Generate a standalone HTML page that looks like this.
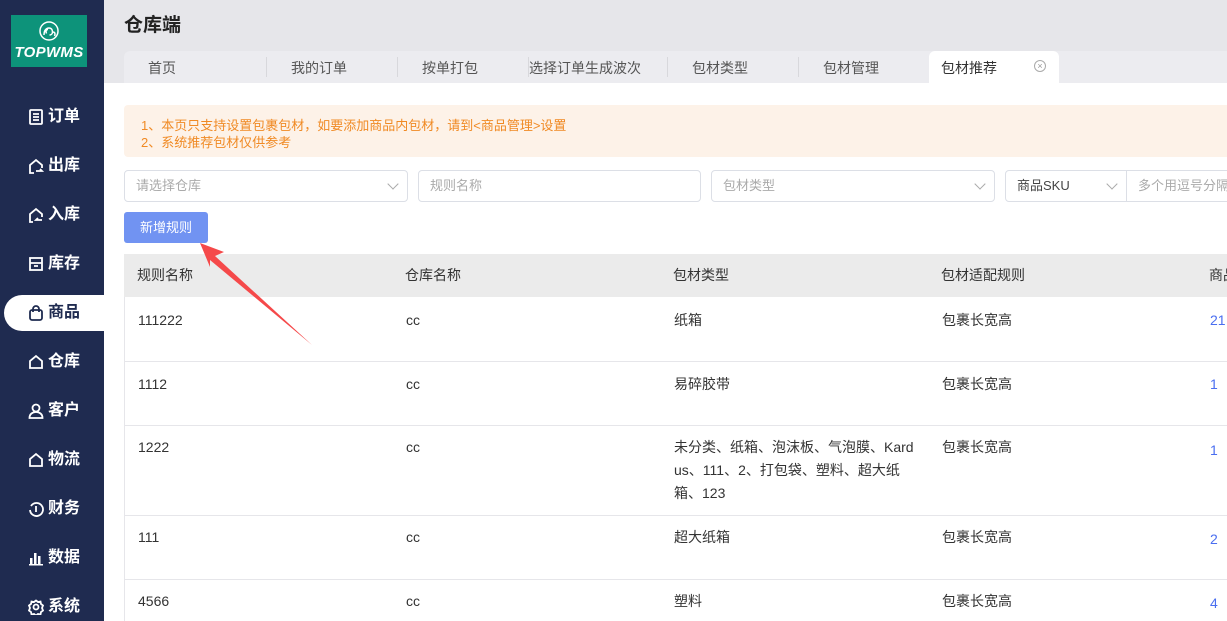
<!DOCTYPE html>
<html style="overflow:hidden;height:621px"><head><meta charset="utf-8"><style>
*{margin:0;padding:0;box-sizing:border-box}
body{width:1227px;height:621px;overflow:hidden;font-family:"Liberation Sans","Noto Sans CJK SC",sans-serif;background:#fff;position:relative;font-size:14px;color:#333}
.side{position:absolute;left:0;top:0;width:104px;height:621px;background:#1f2b50}
.logo{position:absolute;left:11px;top:15px;width:76px;height:52px;background:#0d937a;color:#fff;text-align:center}
.logo .t{position:absolute;left:0;right:0;top:29px;font-size:15px;font-weight:bold;font-style:italic;letter-spacing:0.3px}
.nav{position:absolute;left:0;width:104px;height:36px;color:#fff;font-weight:bold;font-size:16px;line-height:36px;white-space:nowrap}
.nav svg{position:absolute;left:28px;top:10px}
.nav span{position:absolute;left:48px}
.nav.act{left:4px;width:100px;background:#fff;color:#1f2b50;border-radius:18px 0 0 18px}
.nav.act svg{left:24px}.nav.act span{left:44px}
.top{position:absolute;left:104px;top:0;right:0;height:83px;background:#e6e6ea}
.title{position:absolute;left:124px;top:10px;font-size:19px;font-weight:bold;color:#222}
.tabs{position:absolute;left:124px;top:51px;width:1103px;height:32px;background:#ececf0;border-radius:6px 0 0 0}
.tab{position:absolute;top:0;height:32px;line-height:34px;font-size:14px;color:#555;white-space:nowrap}
.sep{position:absolute;top:6px;width:1px;height:20px;background:#d8d8dc}
.tabact{position:absolute;left:929px;top:51px;width:130px;height:32px;background:#fff;border-radius:6px 6px 0 0;font-size:14px;line-height:34px;padding-left:12px;color:#333}
.notice{position:absolute;left:124px;top:105px;width:1103px;height:52px;background:#fdf2e8;border-radius:4px 0 0 4px;color:#f08a24;font-size:13px;line-height:17px;padding:12px 0 0 17px}
.inp{position:absolute;top:170px;height:32px;border:1px solid #dcdfe6;border-radius:4px;color:#aaa;font-size:13px;line-height:30px;padding-left:11px;background:#fff;white-space:nowrap;overflow:hidden}
.chev{position:absolute;right:10px;top:9px;width:8px;height:8px;border-right:1px solid #aaa;border-bottom:1px solid #aaa;transform:rotate(45deg)}
.btn{position:absolute;left:124px;top:212px;width:84px;height:31px;background:#7193f2;border-radius:3px;color:#fff;font-size:13px;line-height:32px;text-align:center}
.th{position:absolute;left:124px;top:254px;width:1103px;height:43px;background:#ebebeb;overflow:hidden}
.row{position:absolute;left:124px;width:1103px;border-bottom:1px solid #e6e6ea;border-left:1px solid #e6e6ea;overflow:hidden}
.c{position:absolute;font-size:14px;color:#333;line-height:23px;white-space:nowrap}
.lnk{color:#4a6ef0}
</style></head><body>
<div class="side">
 <div class="logo">
  <svg width="22" height="22" viewBox="0 0 22 22" style="position:absolute;left:27px;top:5px" fill="none" stroke="#fff" stroke-width="1.5"><circle cx="11" cy="11" r="9"/><path d="M6 15c0-5 2.5-7 5-7s3.5 2 3.5 4-1.5 3-3 3M10 9.5c-2 0-2.5 2-1.5 4M15 12c2 0 2.5 2 1.5 4"/></svg>
  <div class="t">TOPWMS</div>
 </div>
 <div class="nav" style="top:99px"><svg width="16" height="16" fill="none" stroke="#fff" stroke-width="1.8"><rect x="2" y="1" width="12" height="14" rx="1"/><path d="M5 5h6M5 8h6M5 11h6"/></svg><span>订单</span></div>
 <div class="nav" style="top:148px"><svg width="16" height="16" fill="none" stroke="#fff" stroke-width="1.8"><path d="M6 15H2V7l6-5 6 5v3M8 13h6l-2-2"/></svg><span>出库</span></div>
 <div class="nav" style="top:197px"><svg width="16" height="16" fill="none" stroke="#fff" stroke-width="1.8"><path d="M5 15H2V7l6-5 6 5v3M14 13H8l2-2"/></svg><span>入库</span></div>
 <div class="nav" style="top:246px"><svg width="16" height="16" fill="none" stroke="#fff" stroke-width="1.8"><rect x="2" y="2" width="12" height="12"/><path d="M2 7h12M6 10h4"/></svg><span>库存</span></div>
 <div class="nav act" style="top:295px"><svg width="16" height="16" fill="none" stroke="#1f2b50" stroke-width="1.8"><rect x="2" y="5" width="12" height="10" rx="2"/><path d="M5 7V4a3 3 0 016 0v3"/></svg><span>商品</span></div>
 <div class="nav" style="top:344px"><svg width="16" height="16" fill="none" stroke="#fff" stroke-width="1.8"><path d="M2 14V7l6-5 6 5v7z"/></svg><span>仓库</span></div>
 <div class="nav" style="top:393px"><svg width="16" height="16" fill="none" stroke="#fff" stroke-width="1.8"><circle cx="8" cy="5" r="3.5"/><path d="M1.5 15c0-4 3-6 6.5-6s6.5 2 6.5 6z"/></svg><span>客户</span></div>
 <div class="nav" style="top:442px"><svg width="16" height="16" fill="none" stroke="#fff" stroke-width="1.8"><path d="M2 14V7l6-5 6 5v7z"/></svg><span>物流</span></div>
 <div class="nav" style="top:491px"><svg width="16" height="16" fill="none" stroke="#fff" stroke-width="1.8"><path d="M3 5a6.5 6.5 0 11-1 4"/><path d="M8 5v6"/></svg><span>财务</span></div>
 <div class="nav" style="top:540px"><svg width="16" height="16" fill="#fff"><rect x="2" y="8" width="2.5" height="6"/><rect x="6" y="3" width="2.5" height="11"/><rect x="10" y="6" width="2.5" height="8"/><rect x="1" y="14" width="14" height="1.5"/></svg><span>数据</span></div>
 <div class="nav" style="top:589px"><svg width="16" height="16" fill="none" stroke="#fff" stroke-width="1.8"><circle cx="8" cy="8" r="2.5"/><path d="M8 1.5l2 1.5 2.5-.5.5 2.5 2 1.5-1 2.5 1 2.5-2 1.5-.5 2.5-2.5-.5-2 1.5-2-1.5-2.5.5-.5-2.5-2-1.5 1-2.5-1-2.5 2-1.5.5-2.5 2.5.5z"/></svg><span>系统</span></div>
</div>
<div class="top"></div>
<div class="title">仓库端</div>
<div class="tabs">
 <div class="tab" style="left:24px">首页</div><div class="sep" style="left:142px"></div>
 <div class="tab" style="left:167px">我的订单</div><div class="sep" style="left:273px"></div>
 <div class="tab" style="left:298px">按单打包</div><div class="sep" style="left:404px"></div>
 <div class="tab" style="left:405px">选择订单生成波次</div><div class="sep" style="left:543px"></div>
 <div class="tab" style="left:568px">包材类型</div><div class="sep" style="left:674px"></div>
 <div class="tab" style="left:699px">包材管理</div>
</div>
<div class="tabact">包材推荐<span style="position:absolute;left:105px;top:9px;width:12px;height:12px;border:1px solid #aaa;border-radius:50%;font-size:9px;line-height:10px;text-align:center;color:#999">×</span></div>
<div class="notice">1、本页只支持设置包裹包材，如要添加商品内包材，请到&lt;商品管理&gt;设置<br>2、系统推荐包材仅供参考</div>
<div class="inp" style="left:124px;width:284px">请选择仓库<i class="chev"></i></div>
<div class="inp" style="left:418px;width:283px">规则名称</div>
<div class="inp" style="left:711px;width:284px">包材类型<i class="chev"></i></div>
<div class="inp" style="left:1005px;width:122px;color:#444;border-radius:4px 0 0 4px">商品SKU<i class="chev"></i></div>
<div class="inp" style="left:1126px;width:110px;border-radius:0">多个用逗号分隔</div>
<div class="btn">新增规则</div>
<div class="th">
 <div class="c" style="left:13px;top:10px">规则名称</div>
 <div class="c" style="left:281px;top:10px">仓库名称</div>
 <div class="c" style="left:549px;top:10px">包材类型</div>
 <div class="c" style="left:817px;top:10px">包材适配规则</div>
 <div class="c" style="left:1085px;top:10px">商品</div>
</div>
<div class="row" style="top:297px;height:65px"><div class="c" style="left:13px;top:12px">111222</div><div class="c" style="left:281px;top:12px">cc</div><div class="c" style="left:549px;top:12px">纸箱</div><div class="c" style="left:817px;top:12px">包裹长宽高</div><div class="c lnk" style="left:1085px;top:12px">21</div></div>
<div class="row" style="top:362px;height:64px"><div class="c" style="left:13px;top:11px">1112</div><div class="c" style="left:281px;top:11px">cc</div><div class="c" style="left:549px;top:11px">易碎胶带</div><div class="c" style="left:817px;top:11px">包裹长宽高</div><div class="c lnk" style="left:1085px;top:11px">1</div></div>
<div class="row" style="top:426px;height:90px"><div class="c" style="left:13px;top:10px">1222</div><div class="c" style="left:281px;top:10px">cc</div><div class="c" style="left:549px;top:10px">未分类、纸箱、泡沫板、气泡膜、Kard<br>us、111、2、打包袋、塑料、超大纸<br>箱、123</div><div class="c" style="left:817px;top:10px">包裹长宽高</div><div class="c lnk" style="left:1085px;top:13px">1</div></div>
<div class="row" style="top:516px;height:64px"><div class="c" style="left:13px;top:10px">111</div><div class="c" style="left:281px;top:10px">cc</div><div class="c" style="left:549px;top:10px">超大纸箱</div><div class="c" style="left:817px;top:10px">包裹长宽高</div><div class="c lnk" style="left:1085px;top:12px">2</div></div>
<div class="row" style="top:580px;height:41px;border-bottom:none"><div class="c" style="left:13px;top:10px">4566</div><div class="c" style="left:281px;top:10px">cc</div><div class="c" style="left:549px;top:10px">塑料</div><div class="c" style="left:817px;top:10px">包裹长宽高</div><div class="c lnk" style="left:1085px;top:12px">4</div></div>
<svg width="1227" height="621" style="position:absolute;left:0;top:0;pointer-events:none"><path d="M200 243L224 252L215 256L312 345L210 260L210 267Z" fill="#f5494a"/></svg>
</body></html>
